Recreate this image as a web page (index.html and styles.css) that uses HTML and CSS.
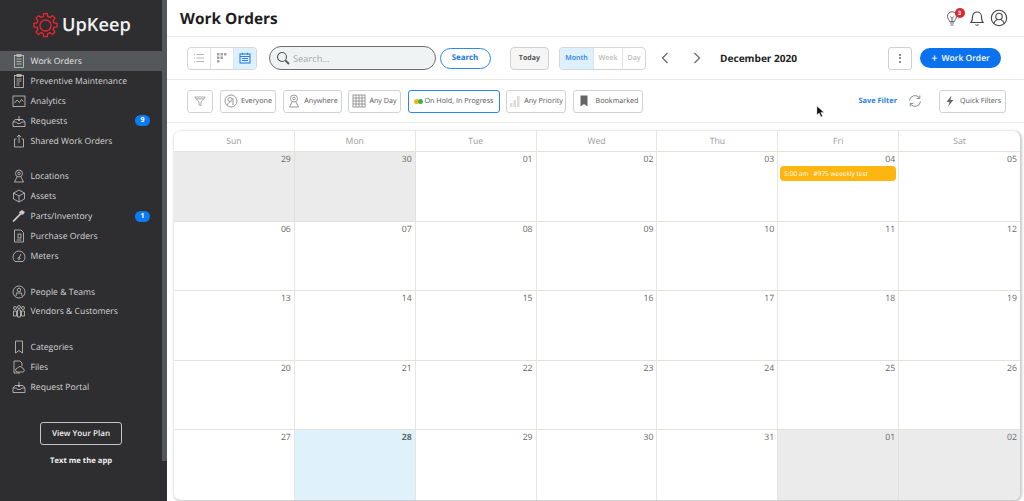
FILE: index.html
```html
<!DOCTYPE html>
<html lang="en">
<head>
<meta charset="utf-8">
<title>Work Orders</title>
<link rel="stylesheet" href="styles.css">
</head>
<body>
<div class="app">
  <aside class="sidebar">
    <div class="thumb"></div>
    <div class="logo">
      <svg class="logo-gear" viewBox="0 0 24 24" fill="none" stroke="#ee2430" stroke-width="1.300" stroke-linejoin="round"><path d="M10.300 .5h3.400l.5 3 2 .8 2.500-1.800 2.400 2.400-1.800 2.500.8 2 3 .5v3.400l-3 .5-.8 2 1.800 2.500-2.400 2.400-2.500-1.800-2 .8-.5 3h-3.400l-.5-3-2-.8-2.500 1.800-2.400-2.400 1.800-2.500-.8-2-3-.5v-3.400l3-.5.8-2-1.800-2.500 2.400-2.400 2.500 1.800 2-.8z"/><circle cx="12" cy="12" r="5.300"/></svg>
      <span class="logo-text">UpKeep</span>
    </div>
    <nav class="nav">
      <div class="nav-group">
        <a class="nav-item active"><svg class="ni" viewBox="0 0 14 14"><rect x="2.500" y="1.500" width="9" height="12"/><rect x="5" y=".5" width="4" height="2"/><path d="M4.500 5h5M4.500 7.500h5M4.500 10h5"/></svg><span>Work Orders</span></a>
        <a class="nav-item"><svg class="ni" viewBox="0 0 14 14"><rect x="2.500" y="1.500" width="9" height="12"/><rect x="5" y=".5" width="4" height="2"/><path d="M4.500 5h5M4.500 7h5M4.500 9h3M4.500 11h3"/></svg><span>Preventive Maintenance</span></a>
        <a class="nav-item"><svg class="ni" viewBox="0 0 14 14"><rect x="1" y="2" width="12" height="10.500"/><path d="M2.500 9l2.500-3 2.500 2.500 2-3 2 2"/></svg><span>Analytics</span></a>
        <a class="nav-item"><svg class="ni" viewBox="0 0 14 14"><path d="M1 8l2-2.500h8l2 2.500v4.500H1zM1 8h3.500l1 1.500h3l1-1.500H13M7 2v5M5.300 5L7 7l1.700-2"/></svg><span>Requests</span><b class="count">9</b></a>
        <a class="nav-item"><svg class="ni" viewBox="0 0 14 14"><path d="M4.500 5H2.500v8h9V5H9.500M7 9V1M5 3l2-2 2 2"/></svg><span>Shared Work Orders</span></a>
      </div>
      <div class="nav-group">
        <a class="nav-item"><svg class="ni" viewBox="0 0 14 14"><circle cx="7" cy="4.500" r="3.500"/><circle cx="7" cy="4.500" r="1.300"/><path d="M5 8l-2.500 5h9L9 8"/></svg><span>Locations</span></a>
        <a class="nav-item"><svg class="ni" viewBox="0 0 14 14"><path d="M7 1l5.500 3v6L7 13l-5.500-3V4zM1.500 4L7 7l5.500-3M7 7v6"/></svg><span>Assets</span></a>
        <a class="nav-item"><svg class="ni ni-solid" viewBox="0 0 14 14"><path d="M1 13l-.3-1.500 7-7-.6-1.500L10 1l3 2-2 2.800-1.700-.4-7 7z"/></svg><span>Parts/Inventory</span><b class="count">1</b></a>
        <a class="nav-item"><svg class="ni" viewBox="0 0 14 14"><path d="M2.500 1h6.500l2.500 2.500V13h-9z"/><rect x="6" y="5" width="3" height="4"/><path d="M4.500 11h5"/></svg><span>Purchase Orders</span></a>
        <a class="nav-item"><svg class="ni" viewBox="0 0 14 14"><path d="M3 12.500a6 6 0 1 1 8 0zM7 9l2-4"/><circle cx="7" cy="9.500" r="1"/></svg><span>Meters</span></a>
      </div>
      <div class="nav-group">
        <a class="nav-item"><svg class="ni" viewBox="0 0 14 14"><circle cx="7" cy="7" r="6"/><circle cx="7" cy="5" r="1.800"/><path d="M4 11l.5-3h5l.5 3"/></svg><span>People &amp; Teams</span></a>
        <a class="nav-item"><svg class="ni" viewBox="0 0 14 14"><circle cx="3" cy="4" r="1.500"/><circle cx="7" cy="3" r="1.500"/><circle cx="11" cy="4" r="1.500"/><path d="M1.500 7h3v5h-3zM5.500 6h3v7h-3zM9.500 7h3v5h-3z"/></svg><span>Vendors &amp; Customers</span></a>
      </div>
      <div class="nav-group">
        <a class="nav-item"><svg class="ni" viewBox="0 0 14 14"><path d="M3.500 1h7v12L7 10.500 3.500 13z"/></svg><span>Categories</span></a>
        <a class="nav-item"><svg class="ni" viewBox="0 0 14 14"><path d="M8 13H2V1h6l2 2v3M5 12a2 2 0 0 1 .5-3.900 3 3 0 0 1 5.500.6 1.700 1.700 0 0 1 0 3.300z"/></svg><span>Files</span></a>
        <a class="nav-item"><svg class="ni" viewBox="0 0 14 14"><path d="M1 8l2-2.500h8l2 2.500v4.500H1zM1 8h3.500l1 1.500h3l1-1.500H13M7 2v5M5.300 5L7 7l1.700-2"/></svg><span>Request Portal</span></a>
      </div>
    </nav>
    <a class="plan">View Your Plan</a>
    <a class="text-app">Text me the app</a>
  </aside>

  <main class="main">
    <header class="topbar">
      <h1 class="title">Work Orders</h1>
      <div class="top-icons">
        <span class="bulb">
          <svg class="i16" viewBox="0 0 16 16" fill="none" stroke="#666" stroke-width="1"><path d="M5.500 11.500c0-2-2-2.500-2-5.200a4.500 4.500 0 0 1 9 0c0 2.700-2 3.200-2 5.200zM6 13h4M6.500 15h3M6.500 6.500l1.500 2 1.500-2M8 8.500v3"/></svg>
          <b class="bulb-badge">3</b>
        </span>
        <svg class="i18" viewBox="0 0 18 18" fill="none" stroke="#444" stroke-width="1.100"><path d="M3 13.500c1.500-1.500 1.500-3 1.500-6a4.500 4.500 0 0 1 9 0c0 3 0 4.500 1.500 6zM7.500 15.500a1.800 1.800 0 0 0 3 0"/></svg>
        <svg class="i18" viewBox="0 0 18 18" fill="none" stroke="#444" stroke-width="1.100"><circle cx="9" cy="9" r="7.700"/><circle cx="9" cy="7.500" r="3.200"/><path d="M3.800 14.500c.5-2.300 2.500-3.500 3.200-3.800M14.200 14.500c-.5-2.300-2.500-3.500-3.200-3.800"/></svg>
      </div>
    </header>

    <section class="toolbar">
      <div class="seg views">
        <span class="seg-cell view-cell"><svg class="i12" viewBox="0 0 12 12" stroke="#b5b5b5" fill="none"><path d="M3.500 2.500H11M3.500 6H11M3.500 9.500H11M1 2.500h1M1 6h1M1 9.500h1"/></svg></span>
        <span class="seg-cell view-cell"><svg class="i12" viewBox="0 0 12 12" fill="#a5a5a5"><rect x="1" y="1" width="2.500" height="2.500"/><rect x="4.500" y="1" width="2.500" height="2.500"/><rect x="8" y="1" width="2.500" height="2.500"/><rect x="1" y="4.500" width="2.500" height="2.500"/><rect x="4.500" y="4.500" width="2.500" height="2.500"/><rect x="1" y="8" width="2.500" height="2.500"/></svg></span>
        <span class="seg-cell view-cell on"><svg class="i12" viewBox="0 0 12 12" fill="none" stroke="#2b7fe0" stroke-width="1.100"><rect x="1" y="2" width="10" height="9"/><path d="M1 4.500h10M3.500 .8v2M8.500 .8v2M3 6.500h6M3 8.500h6"/></svg></span>
      </div>
      <div class="search-box">
        <svg class="i14" viewBox="0 0 14 14" fill="none" stroke="#555" stroke-width="1.100"><circle cx="6" cy="6" r="4.500"/><path d="M9.300 9.300l3.700 3.700" stroke-width="1.800"/></svg>
        <span class="search-ph">Search...</span>
      </div>
      <a class="search-btn">Search</a>
      <a class="today">Today</a>
      <div class="seg ranges">
        <span class="seg-cell rg-month on">Month</span>
        <span class="seg-cell rg-week">Week</span>
        <span class="seg-cell rg-day">Day</span>
      </div>
      <svg class="chev chev-l" viewBox="0 0 8 12" fill="none" stroke="#666" stroke-width="1.200"><path d="M6.500 1L1.500 6l5 5"/></svg>
      <svg class="chev chev-r" viewBox="0 0 8 12" fill="none" stroke="#666" stroke-width="1.200"><path d="M1.500 1l5 5-5 5"/></svg>
      <span class="period">December 2020</span>
      <a class="more"><i></i><i></i><i></i></a>
      <a class="new-wo"><span class="plus">+</span>Work Order</a>
    </section>

    <section class="filters">
      <a class="chip chip-funnel"><svg class="i12" viewBox="0 0 12 12" fill="none" stroke="#aaa"><path d="M.8 2h10.400L7 7v3.500L5 10V7zM2.500 3.800h7"/></svg></a>
      <a class="chip chip-everyone"><svg class="i14" viewBox="0 0 14 14" fill="none" stroke="#999"><circle cx="7" cy="7" r="6"/><circle cx="6" cy="5.500" r="2"/><path d="M9 4v7M3.500 11c.5-2 1.500-3 3-3"/></svg>Everyone</a>
      <a class="chip chip-anywhere"><svg class="i14" viewBox="0 0 14 14" fill="none" stroke="#999"><circle cx="7" cy="4.500" r="3.500"/><circle cx="7" cy="4.500" r="1.300"/><path d="M5 8l-2.500 5h9L9 8"/></svg>Anywhere</a>
      <a class="chip chip-day"><svg class="i14" viewBox="0 0 14 14" fill="none" stroke="#999"><rect x="1" y="1" width="12" height="12"/><path d="M1 4h12M1 7h12M1 10h12M4 1v12M7 1v12M10 1v12"/></svg>Any Day</a>
      <a class="chip chip-status"><span class="dots"><i class="dot-y"></i><i class="dot-g"></i></span>On Hold, In Progress</a>
      <a class="chip chip-priority"><svg class="i12" viewBox="0 0 12 12" fill="#dcdcdc"><rect x="1" y="8" width="2.500" height="4"/><rect x="4.500" y="5" width="2.500" height="7"/><rect x="8" y="1" width="2.500" height="11"/></svg>Any Priority</a>
      <a class="chip chip-bookmark"><svg class="i12" viewBox="0 0 12 12" fill="#666"><path d="M2.500 .5h7v11L6 9l-3.500 2.500z"/></svg>Bookmarked</a>
      <a class="save">Save Filter</a>
      <svg class="refresh" viewBox="0 0 14 14" fill="none" stroke="#888"><path d="M1.500 6.500A5.500 5.500 0 0 1 11.500 4M12.500 7.500A5.500 5.500 0 0 1 2.500 10M11.800 1.500v3h-3M2.200 12.500v-3h3"/></svg>
      <a class="chip chip-quick"><svg class="i12" viewBox="0 0 12 12" fill="#666"><path d="M7.500 .5L2.500 7h3L4 11.500 9.500 5h-3z"/></svg>Quick Filters</a>
    </section>

    <section class="calendar">
      <div class="dow">Sun</div><div class="dow">Mon</div><div class="dow">Tue</div><div class="dow">Wed</div><div class="dow">Thu</div><div class="dow">Fri</div><div class="dow">Sat</div>
      <div class="day off">29</div><div class="day off">30</div><div class="day">01</div><div class="day">02</div><div class="day">03</div>
      <div class="day">04<div class="event"><span class="ev-time">5:00 am</span><span>#975 weeekly test</span></div></div>
      <div class="day">05</div>
      <div class="day">06</div><div class="day">07</div><div class="day">08</div><div class="day">09</div><div class="day">10</div><div class="day">11</div><div class="day">12</div>
      <div class="day">13</div><div class="day">14</div><div class="day">15</div><div class="day">16</div><div class="day">17</div><div class="day">18</div><div class="day">19</div>
      <div class="day">20</div><div class="day">21</div><div class="day">22</div><div class="day">23</div><div class="day">24</div><div class="day">25</div><div class="day">26</div>
      <div class="day">27</div><div class="day today-cell">28</div><div class="day">29</div><div class="day">30</div><div class="day">31</div><div class="day off">01</div><div class="day off">02</div>
    </section>
  </main>
</div>
<svg class="cursor" viewBox="0 0 10 14"><path d="M1 1v10l2.500-2.300L5.500 13l1.800-.8-2-4.200H9z" fill="#111" stroke="#fff" stroke-width=".5"/></svg>
</body>
</html>
```
FILE: styles.css
```css
* { box-sizing: border-box; }
html, body { margin: 0; height: 100%; overflow: hidden; }
body { font-family: "Open Sans", "Liberation Sans", sans-serif; background: #fff; color: #333; text-rendering: geometricPrecision; }
a { display: block; }
svg { display: block; flex: none; }
.app { display: flex; height: 501px; }

/* sidebar */
.sidebar { position: relative; width: 167px; flex: none; background: #2e2e31; color: #d8d8d8; padding-right: 5px; display: flex; flex-direction: column; }
.thumb { position: absolute; right: 0; top: 0; width: 5px; height: 461px; background: #54575a; }
.logo { display: flex; align-items: center; height: 51px; padding: 0 0 2px 33px; }
.logo-gear { width: 25px; height: 25px; margin-top: 1px; }
.logo-text { font-size: 18.200px; font-weight: 600; color: #f2f2f2; margin-left: 4px; }
.nav-group { margin-bottom: 15.800px; }
.nav-item { display: flex; align-items: center; height: 19.900px; padding: 0 12px; font-size: 8.600px; color: #d4d4d4; }
.nav-item.active { background: #55585a; height: 20px; color: #e6e6e6; }
.ni { width: 14px; height: 14px; margin-right: 4.500px; fill: none; stroke: #c8c8c8; stroke-width: .8; }
.ni-solid { fill: #c8c8c8; stroke: none; }
.count { margin-left: auto; width: 15px; height: 11px; border-radius: 6px; background: #0a7cf5; color: #fff; font-size: 7px; font-weight: 700; line-height: 11px; text-align: center; }
.plan { width: 82px; height: 23px; margin: 9.500px 0 0 40px; border: 1px solid #c4c4c4; border-radius: 3px; font-size: 8.100px; font-weight: 600; color: #eee; line-height: 21px; text-align: center; }
.text-app { margin: 10.500px 0 0 50px; font-size: 7.700px; font-weight: 700; color: #eee; }

/* main */
.main { flex: 1; min-width: 0; display: flex; flex-direction: column; }
.topbar { height: 37px; border-bottom: 1px solid #ebe9e4; display: flex; align-items: center; padding: 0 16px 0 13px; }
.title { margin: 0; font-size: 15.400px; font-weight: 700; color: #1d1d1d; }
.top-icons { margin-left: auto; display: flex; align-items: center; gap: 4px; }
.bulb { position: relative; margin-right: 4px; }
.i12 { width: 12px; height: 12px; }
.i14 { width: 14px; height: 14px; }
.i16 { width: 16px; height: 16px; }
.i18 { width: 18px; height: 18px; }
.bulb-badge { position: absolute; top: -2px; left: 10.500px; width: 10px; height: 10px; border-radius: 50%; background: #e0252f; color: #fff; font-size: 6px; line-height: 10px; text-align: center; }

.toolbar { height: 43px; border-bottom: 1px solid #ebe9e4; display: flex; align-items: center; padding-left: 20px; }
.seg { display: flex; height: 23px; border: 1px solid #d6d6d6; border-radius: 4px; overflow: hidden; }
.views { width: 70px; }
.seg-cell { display: flex; align-items: center; justify-content: center; height: 100%; font-size: 7.100px; color: #b0b0b0; font-weight: 600; }
.view-cell { flex: 1; }
.view-cell + .view-cell { border-left: 1px solid #e2e2e2; }
.seg-cell.on { background: #dcf0fd; color: #2b7fe0; }
.search-box { display: flex; align-items: center; gap: 3px; width: 167px; height: 24px; margin-left: 12px; padding-left: 6px; border: 1px solid #6e6e6e; border-radius: 12px; background: #f0f3f4; }
.search-ph { font-size: 9.300px; color: #a8a8a8; }
.search-btn { width: 51px; height: 21px; margin-left: 3.500px; border: 1px solid #2b86ef; border-radius: 11px; color: #1877e8; font-size: 7.900px; font-weight: 700; line-height: 19px; text-align: center; }
.today { width: 39px; height: 23px; margin-left: 19.500px; border: 1px solid #d2d2d2; border-radius: 4px; background: #f5f5f5; color: #555; font-size: 7.100px; font-weight: 700; line-height: 21px; text-align: center; }
.ranges { width: 87px; margin-left: 10px; }
.rg-month { width: 33px; }
.rg-week { width: 29px; border-left: 1px solid #e2e2e2; }
.rg-day { flex: 1; border-left: 1px solid #e2e2e2; }
.rg-day, .rg-week { color: #bbb; }
.chev { width: 8px; height: 12px; }
.chev-l { margin-left: 15px; }
.chev-r { margin-left: 24px; }
.period { margin-left: 19px; font-size: 10.100px; font-weight: 700; color: #222; white-space: nowrap; }
.more { display: flex; flex-direction: column; align-items: center; justify-content: center; gap: 1.500px; width: 24px; height: 23px; margin-left: auto; border: 1px solid #cfcfcf; border-radius: 3px; }
.more i { width: 2px; height: 2px; border-radius: 50%; background: #666; }
.new-wo { display: flex; align-items: center; justify-content: center; width: 81px; height: 20px; margin: 0 23px 0 8px; border-radius: 10px; background: #0a72ef; color: #fff; font-size: 8.500px; font-weight: 600; }
.plus { font-size: 11px; line-height: 1; margin-right: 4px; }

.filters { height: 43px; border-bottom: 1px solid #ebe9e4; display: flex; align-items: center; padding: 0 18px 0 20px; }
.chip { display: flex; align-items: center; justify-content: center; gap: 3px; height: 23px; margin-right: 7px; border: 1px solid #d2d2d2; border-radius: 3px; font-size: 7.200px; color: #555; white-space: nowrap; }
.chip-funnel { width: 26px; }
.chip-everyone { width: 56px; }
.chip-anywhere { width: 59px; margin-right: 6px; }
.chip-day { width: 53px; }
.chip-status { width: 92px; margin-right: 6px; border-color: #2b86ef; gap: 1px; }
.chip-priority { width: 60px; }
.chip-bookmark { width: 70px; margin-right: 0; gap: 6px; }
.dots { display: flex; }
.dots i { width: 5px; height: 5px; border-radius: 50%; }
.dot-y { background: #f5b50e; }
.dot-g { background: #36b54a; margin-left: -1px; }
.save { margin-left: auto; font-size: 7.400px; font-weight: 700; color: #2b7fe0; }
.refresh { width: 14px; height: 14px; margin: 0 17px 0 11px; }
.chip-quick { width: 67px; margin-right: 0; gap: 4px; }

/* calendar */
.calendar { display: grid; grid-template-columns: repeat(7, 1fr); grid-template-rows: 21px repeat(5, 1fr); width: 846px; height: 369px; margin: 8px 0 0 7px; border-radius: 7px; overflow: hidden; background: #fff; box-shadow: 1px 1px 3px 1px #c8c8c8; }
.dow { text-align: center; font-size: 8.700px; line-height: 20px; color: #9a9a9a; border-right: 1px solid #ebe6dc; border-bottom: 1px solid #e4e2dc; }
.dow:nth-child(7) { border-right: 0; }
.day { padding: 0 3px; text-align: right; font-size: 8.700px; line-height: 14px; color: #666; border-right: 1px solid #e8e5de; border-bottom: 1px solid #e4e2dc; }
.day:nth-child(7n) { border-right: 0; }
.day:nth-last-child(-n+7) { border-bottom: 0; }
.off { background: #ebebeb; border-right-color: #e0e0e0; border-bottom-color: #e0e0e0; }
.today-cell { background: #dff1fb; font-weight: 700; }
.event { display: flex; gap: 5px; height: 15px; margin: 0 -1px; padding-left: 4px; border-radius: 4px; background: #fdb50f; color: #fff; font-size: 6.500px; line-height: 15px; text-align: left; white-space: nowrap; }

.cursor { position: absolute; left: 816px; top: 105px; width: 9px; height: 13px; }
```
